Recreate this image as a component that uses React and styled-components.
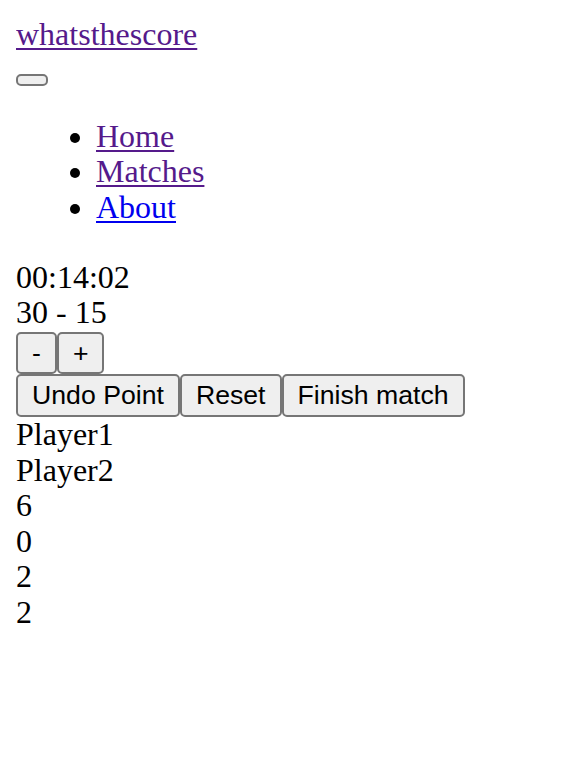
import React from "react"
import styled, { createGlobalStyle } from "styled-components"

const GlobalStyle = createGlobalStyle`
  body {
    margin: 17px 16px 16px;
    font-family: "Liberation Serif", "Times New Roman", serif;
    font-size: 32px;
    line-height: 35.6px;
    color: #000;
    background: #fff;
  }
`

const Header = styled.header`
  display: block;
`

const TextLink = styled.a`
  color: ${(p) => (p.$visited ? "#551a8b" : "#0000ee")};
  text-decoration: underline;
  text-decoration-thickness: 2px;
  text-underline-offset: 3px;
`

const MenuButton = styled.button`
  display: block;
  width: 32px;
  height: 12px;
  margin-top: 21.5px;
  padding: 0;
  border: 2px solid #767676;
  border-radius: 5px;
  background: #efefef;
`

const NavList = styled.ul`
  margin: 32.7px 0 32px;
  padding-left: 80px;
  list-style: disc;
`

const Timer = styled.div`
  padding-top: 2px;
`

const ButtonRow = styled.div`
  display: flex;
  align-items: flex-start;
  padding-top: ${(p) => p.$pad || 0}px;
`

const Button = styled.button`
  font-family: "Liberation Sans", Arial, sans-serif;
  font-size: 26.67px;
  line-height: 30.67px;
  color: #000;
  padding: 4px 14px;
  border: 2px solid #767676;
  border-radius: 5px;
  background: #efefef;
  cursor: pointer;
`

const Line = styled.div``

export default function App() {
  return (
    <>
      <GlobalStyle />
      <Header>
        <TextLink href="#" $visited>whatsthescore</TextLink>
      </Header>
      <nav>
        <MenuButton aria-label="menu" />
        <NavList>
          <li><TextLink href="#" $visited>Home</TextLink></li>
          <li><TextLink href="#" $visited>Matches</TextLink></li>
          <li><TextLink href="#">About</TextLink></li>
        </NavList>
      </nav>
      <main>
        <Timer>00:14:02</Timer>
        <Line>30 - 15</Line>
        <ButtonRow $pad={1}>
          <Button>-</Button>
          <Button>+</Button>
        </ButtonRow>
        <ButtonRow>
          <Button>Undo Point</Button>
          <Button>Reset</Button>
          <Button>Finish match</Button>
        </ButtonRow>
        <Line>Player1</Line>
        <Line>Player2</Line>
        <Line>6</Line>
        <Line>0</Line>
        <Line>2</Line>
        <Line>2</Line>
      </main>
    </>
  )
}
